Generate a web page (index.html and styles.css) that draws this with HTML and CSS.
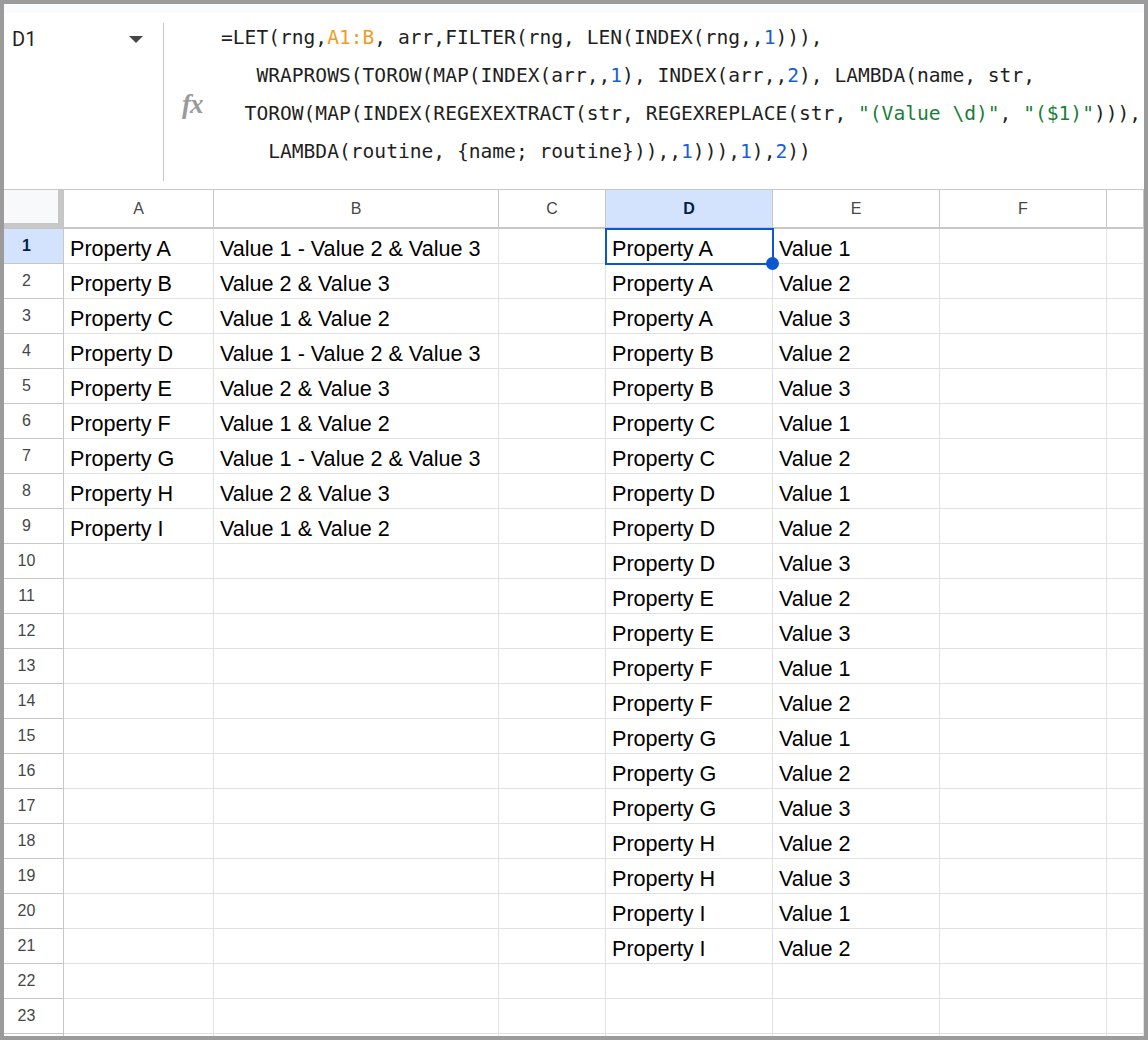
FILE: index.html
```html
<!DOCTYPE html>
<html>
<head>
<meta charset="utf-8">
<link rel="stylesheet" href="styles.css">
</head>
<body>
<div class="frame">
  <div class="topstrip"></div>
  <div class="fbar">
    <div class="namebox">
      <span class="cellref">D1</span>
      <svg class="caret" width="14" height="8" viewBox="0 0 14 8"><polygon points="0,0 14,0 7,7" fill="#444746"/></svg>
    </div>
    <div class="fx"><span class="fxglyph">fx</span></div>
    <pre class="formula">=LET(rng,<span class="rf">A1:B</span>, arr,FILTER(rng, LEN(INDEX(rng,,<span class="num">1</span>))),
   WRAPROWS(TOROW(MAP(INDEX(arr,,<span class="num">1</span>), INDEX(arr,,<span class="num">2</span>), LAMBDA(name, str,
  TOROW(MAP(INDEX(REGEXEXTRACT(str, REGEXREPLACE(str, <span class="str">"(Value \d)"</span>, <span class="str">"($1)"</span>))),
    LAMBDA(routine, {name; routine})),,<span class="num">1</span>))),<span class="num">1</span>),<span class="num">2</span>))</pre>
  </div>
  <div class="grid">
    <div class="corner"></div><div class="ch">A</div><div class="ch">B</div><div class="ch">C</div><div class="ch sel">D</div><div class="ch">E</div><div class="ch">F</div><div class="ch"></div>

    <div class="rh sel">1</div><div class="c">Property A</div><div class="c">Value 1 - Value 2 &amp; Value 3</div><div class="c"></div><div class="c active">Property A<span class="handle"></span></div><div class="c">Value 1</div><div class="c"></div><div class="c"></div>
    <div class="rh">2</div><div class="c">Property B</div><div class="c">Value 2 &amp; Value 3</div><div class="c"></div><div class="c">Property A</div><div class="c">Value 2</div><div class="c"></div><div class="c"></div>
    <div class="rh">3</div><div class="c">Property C</div><div class="c">Value 1 &amp; Value 2</div><div class="c"></div><div class="c">Property A</div><div class="c">Value 3</div><div class="c"></div><div class="c"></div>
    <div class="rh">4</div><div class="c">Property D</div><div class="c">Value 1 - Value 2 &amp; Value 3</div><div class="c"></div><div class="c">Property B</div><div class="c">Value 2</div><div class="c"></div><div class="c"></div>
    <div class="rh">5</div><div class="c">Property E</div><div class="c">Value 2 &amp; Value 3</div><div class="c"></div><div class="c">Property B</div><div class="c">Value 3</div><div class="c"></div><div class="c"></div>
    <div class="rh">6</div><div class="c">Property F</div><div class="c">Value 1 &amp; Value 2</div><div class="c"></div><div class="c">Property C</div><div class="c">Value 1</div><div class="c"></div><div class="c"></div>
    <div class="rh">7</div><div class="c">Property G</div><div class="c">Value 1 - Value 2 &amp; Value 3</div><div class="c"></div><div class="c">Property C</div><div class="c">Value 2</div><div class="c"></div><div class="c"></div>
    <div class="rh">8</div><div class="c">Property H</div><div class="c">Value 2 &amp; Value 3</div><div class="c"></div><div class="c">Property D</div><div class="c">Value 1</div><div class="c"></div><div class="c"></div>
    <div class="rh">9</div><div class="c">Property I</div><div class="c">Value 1 &amp; Value 2</div><div class="c"></div><div class="c">Property D</div><div class="c">Value 2</div><div class="c"></div><div class="c"></div>
    <div class="rh">10</div><div class="c"></div><div class="c"></div><div class="c"></div><div class="c">Property D</div><div class="c">Value 3</div><div class="c"></div><div class="c"></div>
    <div class="rh">11</div><div class="c"></div><div class="c"></div><div class="c"></div><div class="c">Property E</div><div class="c">Value 2</div><div class="c"></div><div class="c"></div>
    <div class="rh">12</div><div class="c"></div><div class="c"></div><div class="c"></div><div class="c">Property E</div><div class="c">Value 3</div><div class="c"></div><div class="c"></div>
    <div class="rh">13</div><div class="c"></div><div class="c"></div><div class="c"></div><div class="c">Property F</div><div class="c">Value 1</div><div class="c"></div><div class="c"></div>
    <div class="rh">14</div><div class="c"></div><div class="c"></div><div class="c"></div><div class="c">Property F</div><div class="c">Value 2</div><div class="c"></div><div class="c"></div>
    <div class="rh">15</div><div class="c"></div><div class="c"></div><div class="c"></div><div class="c">Property G</div><div class="c">Value 1</div><div class="c"></div><div class="c"></div>
    <div class="rh">16</div><div class="c"></div><div class="c"></div><div class="c"></div><div class="c">Property G</div><div class="c">Value 2</div><div class="c"></div><div class="c"></div>
    <div class="rh">17</div><div class="c"></div><div class="c"></div><div class="c"></div><div class="c">Property G</div><div class="c">Value 3</div><div class="c"></div><div class="c"></div>
    <div class="rh">18</div><div class="c"></div><div class="c"></div><div class="c"></div><div class="c">Property H</div><div class="c">Value 2</div><div class="c"></div><div class="c"></div>
    <div class="rh">19</div><div class="c"></div><div class="c"></div><div class="c"></div><div class="c">Property H</div><div class="c">Value 3</div><div class="c"></div><div class="c"></div>
    <div class="rh">20</div><div class="c"></div><div class="c"></div><div class="c"></div><div class="c">Property I</div><div class="c">Value 1</div><div class="c"></div><div class="c"></div>
    <div class="rh">21</div><div class="c"></div><div class="c"></div><div class="c"></div><div class="c">Property I</div><div class="c">Value 2</div><div class="c"></div><div class="c"></div>
    <div class="rh">22</div><div class="c"></div><div class="c"></div><div class="c"></div><div class="c"></div><div class="c"></div><div class="c"></div><div class="c"></div>
    <div class="rh">23</div><div class="c"></div><div class="c"></div><div class="c"></div><div class="c"></div><div class="c"></div><div class="c"></div><div class="c"></div>
    <div class="rh"></div><div class="c"></div><div class="c"></div><div class="c"></div><div class="c"></div><div class="c"></div><div class="c"></div><div class="c"></div>
  </div>
</div>
</body>
</html>
```
FILE: styles.css
```css
html, body {
  margin: 0;
  padding: 0;
  background: #ffffff;
}
.frame {
  box-sizing: border-box;
  width: 1148px;
  height: 1040px;
  border: 4px solid #9b9b9b;
  overflow: hidden;
  background: #ffffff;
  font-family: "Liberation Sans", Arial, sans-serif;
}
.topstrip {
  height: 9px;
  background: #f9fbfd;
}
.fbar {
  box-sizing: border-box;
  height: 177px;
  display: flex;
  border-bottom: 1px solid #c7c7c7;
  background: #ffffff;
}
.namebox {
  box-sizing: border-box;
  width: 159px;
  display: flex;
  align-items: flex-start;
  justify-content: space-between;
  padding: 14px 20px 0 8px;
}
.cellref {
  font-family: Roboto, "Liberation Sans", sans-serif;
  font-size: 20px;
  line-height: 24px;
  color: #1f1f1f;
}
.caret {
  margin-top: 9px;
}
.fx {
  box-sizing: border-box;
  width: 58px;
  margin: 10px 0 8px 0;
  border-left: 1px solid #c7c7c7;
  display: flex;
  align-items: center;
  padding-left: 18px;
}
.fxglyph {
  font-family: "Liberation Serif", "DejaVu Serif", serif;
  font-style: italic;
  font-weight: bold;
  font-size: 27px;
  color: #9a9a9a;
  letter-spacing: -1px;
  margin-top: 4px;
}
.formula {
  margin: 0;
  padding-top: 6px;
  font-family: "DejaVu Sans Mono", "Liberation Mono", monospace;
  font-size: 19.6px;
  line-height: 38px;
  color: #1f1f1f;
  white-space: pre;
}
.rf { color: #f29b1f; }
.num { color: #1a5fd1; }
.str { color: #188038; }

.grid {
  display: grid;
  grid-template-columns: 60px 150px 285px 107px 167px 167px 167px 1fr;
  grid-template-rows: 39px;
  grid-auto-rows: 35px;
}
.grid > div {
  box-sizing: border-box;
}
.corner {
  background: #f8f9fa;
  border-right: 1px solid #c7c7c7;
  border-bottom: 2px solid #c7c7c7;
  box-shadow: inset -5px -4px 0 #c7c7c7;
}
.ch {
  display: flex;
  align-items: center;
  justify-content: center;
  border-right: 1px solid #c7c7c7;
  border-bottom: 2px solid #c7c7c7;
  font-size: 16px;
  color: #444746;
  background: #ffffff;
}
.ch.sel {
  background: #d3e3fd;
  color: #041e49;
  font-weight: bold;
}
.rh {
  display: flex;
  align-items: center;
  justify-content: center;
  padding-right: 14px;
  border-right: 1px solid #c7c7c7;
  border-bottom: 1px solid #c7c7c7;
  font-size: 16px;
  color: #444746;
  background: #ffffff;
}
.rh.sel {
  background: #d3e3fd;
  color: #041e49;
  font-weight: bold;
}
.c {
  display: flex;
  align-items: flex-end;
  padding: 0 4px 2px 6px;
  border-right: 1px solid #e1e1e1;
  border-bottom: 1px solid #e1e1e1;
  font-size: 21.6px;
  line-height: 24px;
  color: #000000;
  white-space: nowrap;
}
.active {
  position: relative;
  outline: 2px solid #0b57d0;
  outline-offset: -1px;
}
.handle {
  position: absolute;
  right: -7px;
  bottom: -7px;
  width: 13px;
  height: 13px;
  border-radius: 50%;
  background: #0b57d0;
  z-index: 2;
}
```
